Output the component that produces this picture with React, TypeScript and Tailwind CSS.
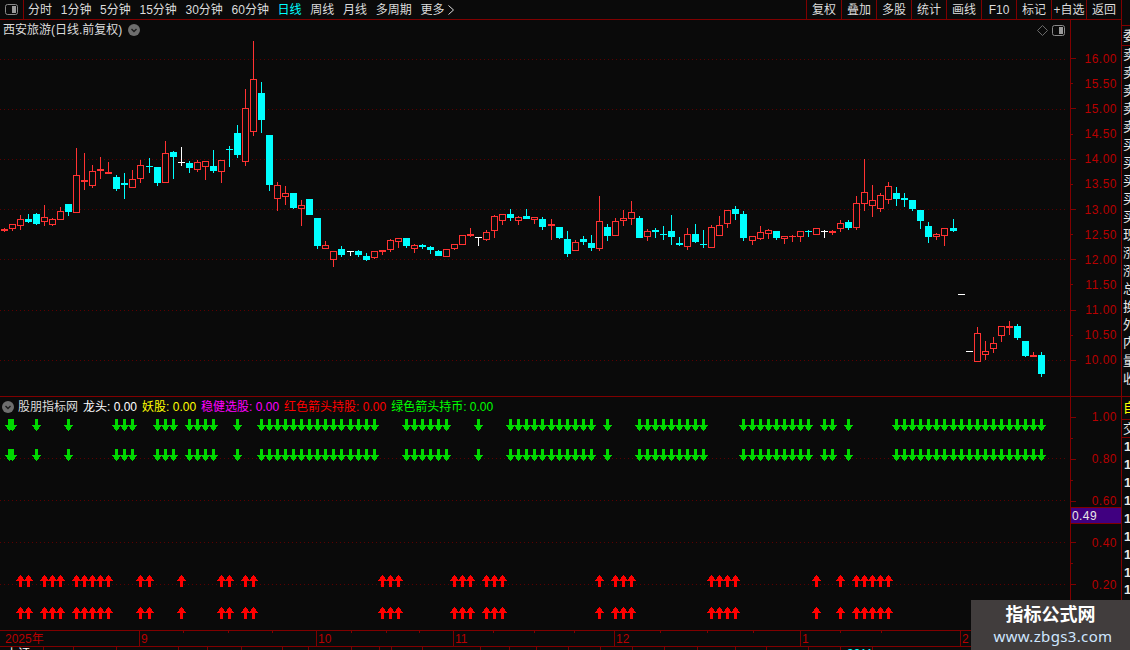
import React from 'react';

type Candle = [string, number, number, number, number];

// [kind, high, body top, body bottom, low] in page pixels, one per trading day
const candles: Candle[] = [
  ['r', 228, 229, 231, 232], ['r', 224, 224, 229, 231], ['r', 215, 219, 226, 230], ['c', 214, 219, 222, 223],
  ['c', 213, 214, 224, 225], ['r', 205, 217, 222, 226], ['r', 218, 219, 225, 226], ['r', 207, 211, 220, 220],
  ['c', 204, 204, 212, 216], ['r', 148, 175, 213, 213], ['r', 153, 180, 182, 190], ['r', 165, 171, 186, 188],
  ['r', 157, 169, 171, 179], ['r', 162, 172, 174, 174], ['c', 175, 177, 189, 191], ['c', 173, 183, 185, 199],
  ['r', 170, 179, 188, 188], ['r', 160, 165, 179, 183], ['c', 158, 166, 167, 173], ['c', 167, 167, 183, 186],
  ['r', 141, 153, 183, 183], ['c', 151, 152, 157, 179], ['w', 147, 162, 163, 166], ['c', 161, 163, 168, 173],
  ['r', 160, 162, 170, 172], ['r', 161, 161, 167, 180], ['c', 150, 166, 171, 173], ['r', 160, 160, 172, 183],
  ['c', 146, 149, 150, 167], ['c', 125, 133, 155, 158], ['r', 89, 108, 162, 166], ['r', 41, 79, 132, 136],
  ['c', 82, 93, 120, 133], ['c', 135, 135, 185, 191], ['r', 182, 185, 199, 211], ['r', 186, 193, 197, 205],
  ['c', 193, 193, 208, 209], ['r', 200, 205, 209, 226], ['c', 199, 199, 215, 215], ['c', 218, 218, 246, 249],
  ['r', 241, 245, 249, 249], ['r', 251, 251, 260, 267], ['c', 246, 249, 255, 257], ['w', 251, 251, 252, 256],
  ['c', 250, 251, 255, 257], ['c', 253, 256, 260, 261], ['r', 251, 251, 258, 259], ['r', 250, 250, 252, 255],
  ['r', 239, 240, 250, 252], ['r', 238, 238, 242, 248], ['c', 238, 238, 246, 248], ['r', 244, 245, 249, 253],
  ['c', 244, 245, 247, 249], ['c', 246, 247, 250, 254], ['c', 250, 251, 256, 256], ['r', 249, 249, 257, 257],
  ['r', 244, 244, 249, 250], ['r', 235, 235, 245, 245], ['r', 228, 234, 236, 237], ['w', 237, 237, 238, 246],
  ['r', 230, 232, 240, 241], ['r', 215, 216, 231, 238], ['r', 214, 214, 221, 225], ['c', 209, 214, 218, 221],
  ['r', 216, 217, 221, 225], ['c', 209, 216, 219, 219], ['r', 217, 217, 220, 224], ['c', 217, 219, 227, 230],
  ['r', 219, 224, 226, 240], ['c', 227, 227, 238, 239], ['c', 231, 239, 254, 257], ['r', 240, 242, 251, 251],
  ['c', 236, 239, 242, 245], ['c', 235, 243, 248, 251], ['r', 196, 221, 249, 251], ['c', 224, 227, 236, 241],
  ['r', 218, 221, 236, 236], ['r', 210, 218, 221, 226], ['r', 201, 212, 219, 225], ['c', 216, 218, 238, 238],
  ['r', 229, 231, 237, 241], ['c', 228, 230, 232, 238], ['c', 226, 234, 235, 240], ['c', 215, 231, 237, 245],
  ['c', 237, 243, 245, 246], ['r', 228, 234, 247, 250], ['c', 224, 234, 242, 243], ['c', 230, 244, 245, 248],
  ['r', 225, 227, 248, 248], ['r', 216, 225, 236, 236], ['r', 210, 210, 224, 228], ['c', 206, 209, 214, 220],
  ['c', 211, 214, 238, 241], ['r', 236, 236, 241, 245], ['r', 226, 232, 239, 240], ['r', 229, 230, 234, 239],
  ['c', 231, 231, 238, 240], ['r', 236, 236, 239, 244], ['r', 235, 236, 237, 242], ['r', 231, 231, 237, 242],
  ['c', 230, 231, 232, 237], ['r', 228, 228, 235, 235], ['w', 230, 231, 232, 238], ['r', 230, 231, 233, 235],
  ['r', 220, 223, 229, 232], ['c', 220, 222, 228, 230], ['r', 196, 203, 228, 230], ['r', 159, 192, 204, 211],
  ['r', 185, 200, 206, 217], ['r', 193, 195, 209, 212], ['r', 182, 186, 200, 204], ['c', 187, 193, 199, 206],
  ['c', 193, 198, 200, 207], ['c', 200, 200, 209, 211], ['c', 210, 210, 221, 229], ['c', 222, 226, 237, 243],
  ['r', 233, 234, 237, 240], ['r', 228, 228, 236, 246], ['c', 219, 228, 231, 232], ['w', 294, 294, 295, 295],
  ['w', 351, 351, 352, 352], ['r', 327, 333, 362, 362], ['r', 341, 351, 355, 360], ['r', 337, 343, 349, 353],
  ['r', 326, 326, 336, 342], ['r', 321, 326, 328, 335], ['c', 324, 326, 338, 340], ['c', 341, 341, 356, 357],
  ['r', 352, 355, 357, 357], ['c', 352, 355, 374, 377],
];

const range = (from: number, to: number) => Array.from({ length: to - from + 1 }, (_, i) => from + i);

const greenDays = [
  4, 8, 14, 15, 16, 19, 20, 21, 23, 24, 25, 26, 29, ...range(32, 46), ...range(50, 55), 59, ...range(63, 73), 75,
  ...range(79, 87), ...range(92, 100), 102, 103, 105, ...range(111, 129),
];

const redDays = [
  2, 3, 5, 6, 7, ...range(9, 13), 17, 18, 22, 27, 28, 30, 31, 47, 48, 49, 56, 57, 58, 60, 61, 62, 74, 76, 77, 78,
  ...range(88, 91), 101, 104, ...range(106, 110),
];

const leftTabs = ['分时', '1分钟', '5分钟', '15分钟', '30分钟', '60分钟', '日线', '周线', '月线', '多周期'];
const rightTabs = ['复权', '叠加', '多股', '统计', '画线', 'F10', '标记', '+自选', '返回'];
const mainPrices = ['16.00', '15.50', '15.00', '14.50', '14.00', '13.50', '13.00', '12.50', '12.00', '11.50', '11.00', '10.50', '10.00'];
const lowerValues = ['1.00', '', '0.80', '', '0.60', '', '0.40', '', '0.20'];
const months = [
  { x: 139, label: '9' }, { x: 316, label: '10' }, { x: 453, label: '11' }, { x: 614, label: '12' },
  { x: 800, label: '1' }, { x: 960, label: '2' },
];
const timeTicks = [183, 228, 272, 351, 386, 419, 493, 534, 574, 660, 707, 753, 840, 881];
const footerCells = [
  { w: 44, text: '上证' }, { w: 30, text: '' }, { w: 43, text: '' }, { w: 62, text: '' }, { w: 29, text: '' },
  { w: 34, text: '' }, { w: 41, text: '' }, { w: 26, text: '' }, { w: 43, text: '' }, { w: 28, text: '' },
  { w: 12, text: '' }, { w: 31, text: '' }, { w: 58, text: '' }, { w: 29, text: '' }, { w: 27, text: '' },
  { w: 32, text: '' }, { w: 32, text: '' }, { w: 32, text: '' }, { w: 32, text: '' }, { w: 33, text: '' },
  { w: 38, text: '' }, { w: 31, text: '' }, { w: 42, text: '' }, { w: 32, text: '' }, { w: 32, text: '3911' },
];
const sideRows = ['卖', '卖', '卖', '卖', '卖', '买', '买', '买', '买', '买', '现', '涨', '涨', '总', '换', '外', '内', '量', '收'];

const dayX = (i: number) => Math.floor(4.3 + 8.04 * i) + 0.5;

function Candles() {
  return (
    <g shapeRendering="crispEdges">
      {candles.map(([kind, high, top, bottom, low], i) => {
        const x = dayX(i);
        const color = kind === 'r' ? '#ff3232' : kind === 'c' ? '#00ffff' : '#ffffff';
        const thin = bottom - top <= 2;
        return (
          <g key={i}>
            <line x1={x} x2={x} y1={high} y2={low} stroke={color} />
            {thin ? (
              <rect x={x - 3.5} y={top} width={7} height={bottom - top} fill={color} />
            ) : (
              <rect
                x={x - 3}
                y={top + 0.5}
                width={6}
                height={bottom - top - 1}
                fill={kind === 'r' ? '#0a0a0a' : color}
                stroke={color}
              />
            )}
          </g>
        );
      })}
    </g>
  );
}

function DownArrow({ x, y }: { x: number; y: number }) {
  return <path d={`M${x - 1.5} ${y}h3v6h3.5l-5 6-5-6h3.5z`} fill="#00d800" shapeRendering="crispEdges" />;
}

function UpArrow({ x, y }: { x: number; y: number }) {
  return <path d={`M${x} ${y}l5 6h-3.5v6h-3v-6h-3.5z`} fill="#ff0000" shapeRendering="crispEdges" />;
}

function DottedLine({ y }: { y: number }) {
  return (
    <line x1={0} x2={1068} y1={y + 0.5} y2={y + 0.5} stroke="#5c0000" strokeDasharray="1 3" shapeRendering="crispEdges" />
  );
}

function PanelIcon() {
  return (
    <svg width="13" height="11" viewBox="0 0 13 11" className="block">
      <rect x="0.5" y="0.5" width="12" height="10" rx="2" fill="none" stroke="#8a8a8a" />
      <rect x="7" y="2" width="4" height="7" fill="#9a9a9a" />
    </svg>
  );
}

function ChevronBadge() {
  return (
    <svg width="12" height="12" viewBox="0 0 12 12" className="block shrink-0">
      <circle cx="6" cy="6" r="6" fill="#6e6e6e" />
      <path d="M3.5 5l2.5 2.5L8.500 5" fill="none" stroke="#1c1c1c" strokeWidth="1.400" />
    </svg>
  );
}

export default function App() {
  return (
    <div className="relative flex h-[650px] w-[1130px] overflow-hidden bg-[#0a0a0a] font-['Liberation_Sans','Noto_Sans_CJK_SC',sans-serif] text-xs">
      <div className="flex w-[1122px] shrink-0 flex-col border-r border-[#800000]">
        {/* Toolbar */}
        <div className="flex h-[20px] shrink-0 items-center border-b border-[#800000] text-[#dcdcdc]">
          <div className="flex h-full w-[24px] items-center justify-center border-r border-[#800000]">
            <PanelIcon />
          </div>
          <div className="ml-[4px] flex items-center gap-[8.700px]">
            {leftTabs.map((tab) => (
              <span key={tab} className={tab === '日线' ? 'text-[#00ffff]' : ''}>
                {tab}
              </span>
            ))}
            <span className="flex items-center gap-[3px]">
              更多
              <svg width="8" height="10" viewBox="0 0 8 10">
                <path d="M1.500 0.500L6.500 5L1.500 9.500" fill="none" stroke="#dcdcdc" />
              </svg>
            </span>
          </div>
          <div className="ml-auto flex h-full">
            {rightTabs.map((tab) => (
              <div key={tab} className="flex h-full w-[35px] items-center justify-center border-l border-[#800000]">
                {tab}
              </div>
            ))}
          </div>
        </div>

        {/* Price chart */}
        <div className="relative flex h-[376px] shrink-0">
          <svg width="1070" height="376" viewBox="0 20 1070 376" className="block shrink-0">
            {[59, 109, 159, 209, 259, 310, 360].map((y) => (
              <DottedLine key={y} y={y} />
            ))}
            <Candles />
          </svg>
          <div className="flex-1 border-l border-[#800000] pt-[26px] text-[#b80000]">
            {mainPrices.map((price, i) => (
              <div key={price} className="flex h-[25.170px] items-center">
                <span className={`h-px bg-[#800000] ${i % 2 === 0 ? 'w-[5px]' : 'w-[2px]'}`} />
                <span className="ml-auto mr-[4px] tracking-[0.5px]">{price}</span>
              </div>
            ))}
          </div>
          <div className="absolute left-[3px] top-[2px] flex items-center gap-[6px] text-[#dcdcdc]">
            西安旅游(日线.前复权)
            <ChevronBadge />
          </div>
          <div className="absolute left-[1037px] top-[5px] flex items-center gap-[4px]">
            <svg width="11" height="11" viewBox="0 0 11 11" className="block">
              <path d="M5.500 0.500L10.500 5.500L5.500 10.500L0.500 5.500z" fill="none" stroke="#6a6a6a" />
            </svg>
            <PanelIcon />
          </div>
        </div>

        {/* Indicator panel */}
        <div className="relative flex h-[234px] shrink-0 border-t border-[#800000]">
          <svg width="1070" height="233" viewBox="0 397 1070 233" className="block shrink-0">
            {[458, 500, 542, 584].map((y) => (
              <DottedLine key={y} y={y} />
            ))}
            {[419, 449].map((y) => (
              <g key={y}>
                <DownArrow x={9.5} y={y} />
                <DownArrow x={12.5} y={y} />
                {greenDays.map((d) => (
                  <DownArrow key={d} x={dayX(d)} y={y} />
                ))}
              </g>
            ))}
            {[575, 607].map((y) => (
              <g key={y}>
                {redDays.map((d) => (
                  <UpArrow key={d} x={dayX(d)} y={y} />
                ))}
              </g>
            ))}
          </svg>
          <div className="relative flex-1 border-l border-[#800000] pt-[10px] text-[#b80000]">
            {lowerValues.map((value, i) => (
              <div key={i} className="flex h-[20.900px] items-center">
                <span className={`h-px bg-[#800000] ${value ? 'w-[5px]' : 'w-[2px]'}`} />
                <span className="ml-auto mr-[4px] tracking-[0.5px]">{value}</span>
              </div>
            ))}
            <div className="absolute left-0 right-0 top-[110px] flex h-[17px] items-center border-y border-[#800000] bg-[#400080] pl-[1px] tracking-[0.4px] text-[#e8e8e8]">
              0.49
            </div>
          </div>
          <div className="absolute left-[2px] top-[2px] flex items-center gap-[5px] text-white">
            <span className="mr-[-1px]">
              <ChevronBadge />
            </span>
            <span className="text-[#dcdcdc]">股朋指标网</span>
            <span>龙头: 0.00</span>
            <span className="text-[#ffff00]">妖股: 0.00</span>
            <span className="text-[#ff00ff]">稳健选股: 0.00</span>
            <span className="text-[#ff0000]">红色箭头持股: 0.00</span>
            <span className="text-[#00ff00]">绿色箭头持币: 0.00</span>
          </div>
        </div>

        {/* Time axis */}
        <div className="h-[17px] shrink-0 border-y border-[#800000]">
          <svg width="1121" height="15" viewBox="0 631 1121 15" className="block">
            {timeTicks.map((x) => (
              <line key={x} x1={x + 0.5} x2={x + 0.5} y1={631} y2={633} stroke="#800000" shapeRendering="crispEdges" />
            ))}
            {months.map((m) => (
              <g key={m.x}>
                <line x1={m.x + 0.5} x2={m.x + 0.5} y1={631} y2={646} stroke="#800000" shapeRendering="crispEdges" />
                <text x={m.x + 2} y={643} fontSize="12" fill="#b80000">
                  {m.label}
                </text>
              </g>
            ))}
            <text x={5} y={643} fontSize="12" fill="#b80000">
              2025年
            </text>
          </svg>
        </div>

        {/* Status bar, cut off by the window */}
        <div className="flex h-[3px] overflow-hidden text-white">
          {footerCells.map((cell, i) => (
            <div
              key={i}
              style={{ width: cell.w }}
              className={`h-[3px] shrink-0 overflow-hidden whitespace-nowrap border-r border-[#800000] pl-[6px] leading-[14px] ${cell.text === '3911' ? 'text-[#00ffff]' : ''}`}
            >
              {cell.text}
            </div>
          ))}
        </div>
      </div>

      {/* Quote column, only its left edge is inside the window */}
      <div className="flex min-w-0 flex-1 flex-col overflow-hidden whitespace-nowrap text-[13px] text-[#e8e8e8]">
        <div className="h-[25px] shrink-0" />
        <div className="flex h-[21px] shrink-0 items-center border-y border-[#800000] pl-[1px]">委</div>
        {sideRows.map((row, i) => (
          <div key={i} className="flex h-[18px] shrink-0 items-center pl-[1px]">
            {row}
          </div>
        ))}
        <div className="flex h-[9px] shrink-0 border-b border-[#800000]" />
        <div className="flex h-[23px] shrink-0 items-center border-b border-[#800000] pl-[1px] text-[#ffff00]">自</div>
        <div className="flex h-[18px] shrink-0 items-center border-b border-[#800000] pl-[1px]">交</div>
        {[0, 1, 2, 3, 4, 5, 6, 7, 8, 9].map((n) => (
          <div key={n} className="flex h-[17.900px] shrink-0 items-center pl-[2px] font-bold">
            1
          </div>
        ))}
      </div>

      {/* Site watermark */}
      <div className="absolute bottom-0 right-0 flex h-[50px] w-[159px] flex-col items-center bg-[#413d3d]">
        <span className="mt-[3px] text-[18px] font-bold leading-[24px] text-white">指标公式网</span>
        <span className="pl-[5px] font-['Noto_Sans',sans-serif] text-[15px] leading-[18px] tracking-[0.35px] text-[#cfe6ff]">
          www.zbgs3.com
        </span>
      </div>
    </div>
  );
}
